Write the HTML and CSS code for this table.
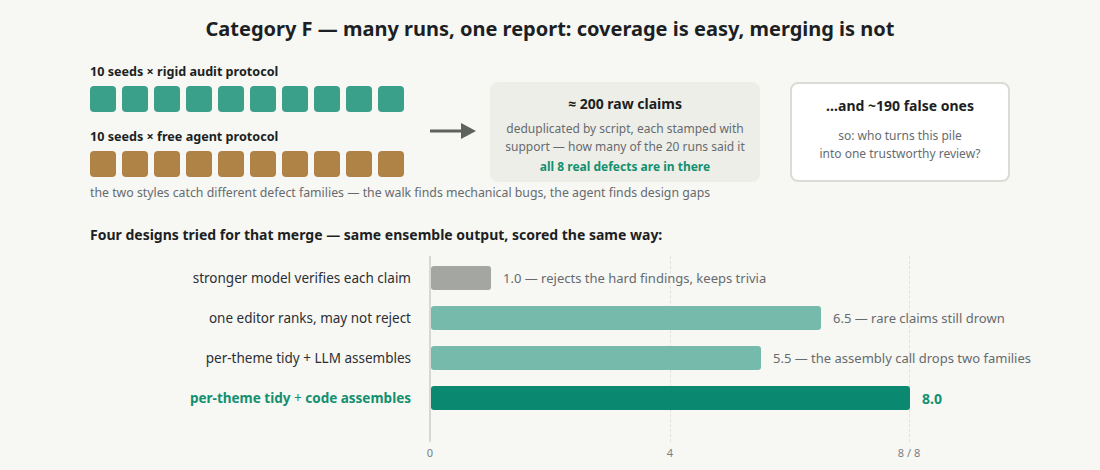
FILE: index.html
```html
<!DOCTYPE html>
<html lang="en">
<head>
<meta charset="utf-8">
<title>Category F</title>
<link rel="stylesheet" href="styles.css">
</head>
<body>
<div class="page">
  <h1 class="title">Category F — many runs, one report: coverage is easy, merging is not</h1>

  <div class="top">
    <div class="seeds">
      <div class="seed-label">10 seeds × rigid audit protocol</div>
      <div class="squares teal">
        <span></span><span></span><span></span><span></span><span></span><span></span><span></span><span></span><span></span><span></span>
      </div>
      <div class="seed-label second">10 seeds × free agent protocol</div>
      <div class="squares brown">
        <span></span><span></span><span></span><span></span><span></span><span></span><span></span><span></span><span></span><span></span>
      </div>
    </div>
    <svg class="arrow" width="48" height="18" viewBox="0 0 48 18">
      <rect x="0" y="7.5" width="34" height="3" fill="#5f6360"/>
      <polygon points="31,1 46,9 31,17" fill="#5f6360"/>
    </svg>
    <div class="box box-claims">
      <div class="box-title">≈ 200 raw claims</div>
      <div class="box-text">deduplicated by script, each stamped with<br>support — how many of the 20 runs said it</div>
      <div class="box-green">all 8 real defects are in there</div>
    </div>
    <div class="box box-false">
      <div class="box-title">…and ~190 false ones</div>
      <div class="box-text">so: who turns this pile<br>into one trustworthy review?</div>
    </div>
  </div>
  <div class="caption">the two styles catch different defect families — the walk finds mechanical bugs, the agent finds design gaps</div>

  <h2 class="section">Four designs tried for that merge — same ensemble output, scored the same way:</h2>

  <div class="chart">
    <div class="labels">
      <div class="label">stronger model verifies each claim</div>
      <div class="label">one editor ranks, may not reject</div>
      <div class="label">per-theme tidy + LLM assembles</div>
      <div class="label best">per-theme tidy <span class="plus">+</span> code assembles</div>
    </div>
    <div class="plot">
      <div class="grid-line" style="left:239px"></div>
      <div class="grid-line" style="left:478px"></div>
      <div class="row"><div class="bar gray" style="width:60px"></div><span class="value">1.0 — rejects the hard findings, keeps trivia</span></div>
      <div class="row"><div class="bar light" style="width:390px"></div><span class="value">6.5 — rare claims still drown</span></div>
      <div class="row"><div class="bar light" style="width:330px"></div><span class="value">5.5 — the assembly call drops two families</span></div>
      <div class="row"><div class="bar dark" style="width:479px"></div><span class="value best-value">8.0</span></div>
    </div>
  </div>
  <div class="ticks">
    <span class="tick" style="left:0px">0</span>
    <span class="tick" style="left:240px">4</span>
    <span class="tick" style="left:479px">8 / 8</span>
  </div>
</div>
</body>
</html>
```

FILE: styles.css
```css
* { box-sizing: border-box; }
html, body {
  margin: 0;
  padding: 0;
  background: #f7f7f3;
}
body {
  font-family: "Noto Sans", "Open Sans", sans-serif;
  color: #1c1f23;
  width: 1100px;
  height: 470px;
  overflow: hidden;
}
.page {
  padding: 15px 0 0 90px;
}
.title {
  margin: 0 0 0 -90px;
  text-align: center;
  font-size: 20px;
  line-height: 28px;
  font-weight: 700;
  color: #1c1f23;
}
.top {
  display: flex;
  align-items: flex-start;
  margin-top: 21px;
}
.seeds {
  display: flex;
  flex-direction: column;
  width: 314px;
}
.seed-label {
  font-size: 12.6px;
  font-weight: 700;
  line-height: 16px;
  color: #1c1f23;
}
.seed-label.second {
  margin-top: 17px;
}
.squares {
  display: flex;
  gap: 6px;
  margin-top: 6px;
}
.squares span {
  width: 26px;
  height: 26px;
  border-radius: 4px;
}
.squares.teal span { background: #3ba08a; }
.squares.brown span { background: #ae8345; }
.arrow {
  margin: 58px 0 0 26px;
  flex: none;
}
.box {
  margin-top: 18px;
  height: 100px;
  border-radius: 8px;
  text-align: center;
}
.box-claims {
  margin-left: 12px;
  width: 270px;
  background: #eeeee8;
  padding-top: 12px;
}
.box-false {
  margin-left: 30px;
  width: 220px;
  background: #ffffff;
  border: 2px solid #dcdcd6;
  padding-top: 12px;
}
.box-title {
  font-size: 14px;
  font-weight: 700;
  line-height: 20px;
  color: #1c1f23;
}
.box-claims .box-text {
  margin-top: 6px;
}
.box-false .box-text {
  margin-top: 11px;
}
.box-text {
  font-size: 12px;
  line-height: 18px;
  color: #666b70;
}
.box-green {
  margin-top: 2px;
  font-size: 12px;
  line-height: 18px;
  font-weight: 700;
  color: #13906f;
}
.caption {
  margin-top: 3px;
  font-size: 12.3px;
  line-height: 16px;
  color: #666b70;
}
.section {
  margin: 24px 0 0 0;
  font-size: 14px;
  line-height: 20px;
  font-weight: 700;
  color: #1c1f23;
}
.chart {
  display: flex;
  margin-top: 11px;
}
.labels {
  width: 340px;
  flex: none;
  padding: 10px 19px 0 0;
  display: flex;
  flex-direction: column;
  gap: 16px;
}
.label {
  height: 24px;
  line-height: 24px;
  text-align: right;
  font-size: 13.5px;
  color: #2b2f33;
  white-space: nowrap;
}
.label.best {
  font-weight: 700;
  color: #13906f;
}
.label.best .plus {
  font-weight: 400;
}
.plot {
  position: relative;
  flex: 1;
  border-left: 2px solid #d8d8d2;
  margin-left: -1px;
  padding: 10px 0 32px 0;
  display: flex;
  flex-direction: column;
  gap: 16px;
}
.grid-line {
  position: absolute;
  top: 0;
  bottom: 0;
  width: 0;
  border-left: 1px dashed #e2e2dc;
}
.row {
  display: flex;
  align-items: center;
  gap: 12px;
  height: 24px;
  position: relative;
}
.bar {
  height: 24px;
  border-radius: 3px;
  flex: none;
}
.bar.gray { background: #a3a6a1; }
.bar.light { background: #75baab; }
.bar.dark { background: #0b8870; }
.value {
  font-size: 13px;
  color: #666b70;
  white-space: nowrap;
}
.best-value {
  font-size: 14px;
  font-weight: 700;
  color: #13906f;
}
.ticks {
  position: relative;
  margin-left: 340px;
  height: 26px;
}
.tick {
  position: absolute;
  top: 3px;
  transform: translateX(-50%);
  font-size: 11px;
  line-height: 16px;
  color: #7a7f8a;
  white-space: nowrap;
}
```
